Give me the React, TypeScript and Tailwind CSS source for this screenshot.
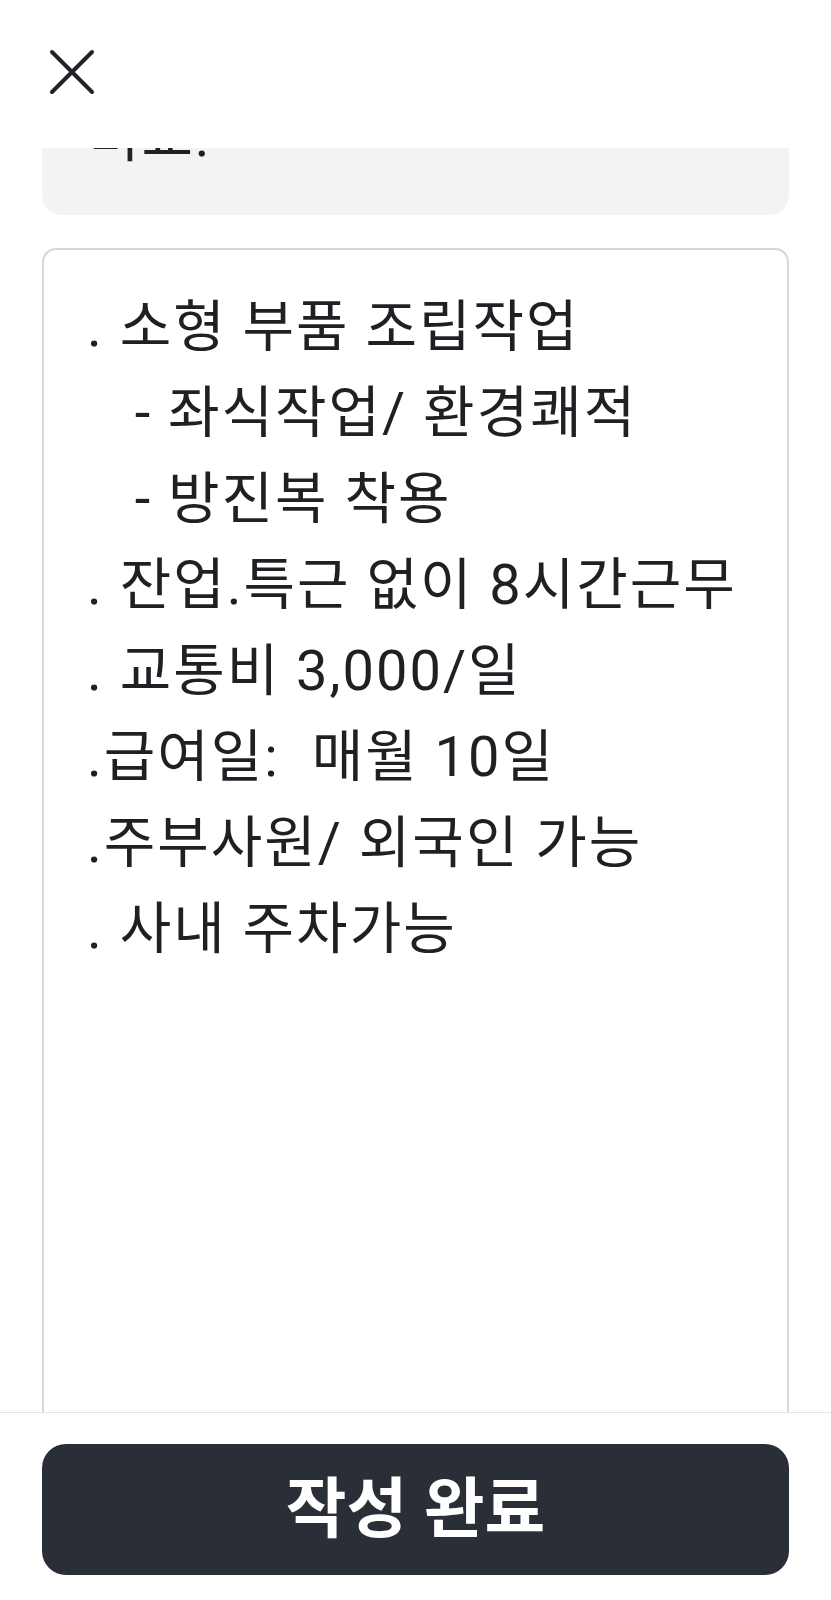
import React from 'react';

const lines = [
  '. 소형 부품 조립작업',
  '   - 좌식작업/ 환경쾌적',
  '   - 방진복 착용',
  '. 잔업.특근 없이 8시간근무',
  '. 교통비 3,000/일',
  '.급여일:  매월 10일',
  '.주부사원/ 외국인 가능',
  '. 사내 주차가능',
];

const font = { fontFamily: 'Roboto, "Noto Sans CJK KR", sans-serif' };

export default function App() {
  return (
    <div className="w-[831px] h-[1600px] bg-white flex flex-col text-[#1f2024]" style={font}>
      {/* 상단 닫기 */}
      <div className="h-[148px] shrink-0 pl-[48px] pt-[48px]">
        <svg width="48" height="48" viewBox="0 0 48 48" fill="none" stroke="#222327" strokeWidth={4} strokeLinecap="round">
          <path d="M4 4L44 44M44 4L4 44" />
        </svg>
      </div>

      {/* 본문 */}
      <div className="flex-1 overflow-hidden px-[42px]">
        <div className="mt-[-173px] bg-[#f2f3f5] rounded-[20px] pl-[46px] pt-[33px] pb-[35px] text-[56px] leading-[86px] tracking-[2px]">
          <div>근무조건 작성 예시</div>
          <div>비교:</div>
        </div>

        <div className="mt-[33px] h-[1300px] border-2 border-[#d6d7dc] rounded-[14px] pl-[43px] pr-[10px] pt-[34px] text-[56px] leading-[86px] tracking-[2px] whitespace-pre-wrap">
          {lines.map((l, i) => (
            <div key={i}>{l}</div>
          ))}
        </div>
      </div>

      {/* 하단 버튼 */}
      <div className="shrink-0 border-t border-[#e3e4e8] px-[42px] pt-[31px] pb-[25px]">
        <button className="w-full h-[131px] rounded-[24px] bg-[#2a2f37] text-white text-[66px] font-bold flex items-center justify-center">
          작성 완료
        </button>
      </div>
    </div>
  );
}
